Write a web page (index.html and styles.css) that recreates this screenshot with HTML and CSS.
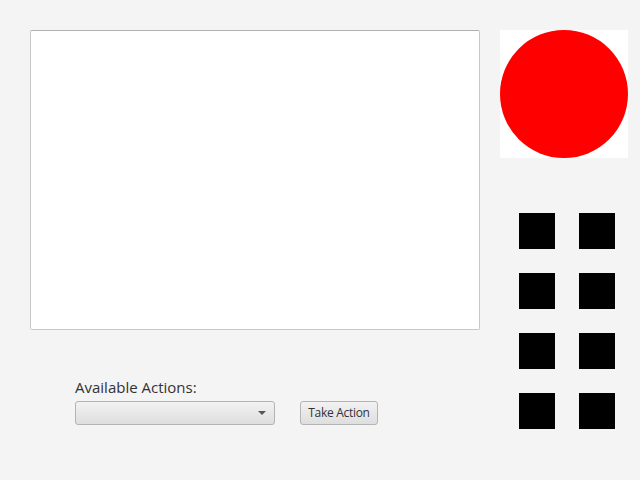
FILE: index.html
```html
<!DOCTYPE html>
<html>
<head>
<meta charset="utf-8">
<link rel="stylesheet" href="styles.css">
</head>
<body>
<div class="app">
  <div class="left">
    <div class="textarea"></div>
    <div class="controls">
      <div class="label">Available Actions:</div>
      <div class="row">
        <div class="combo"><span class="arrow"></span></div>
        <div class="button">Take Action</div>
      </div>
    </div>
  </div>
  <div class="right">
    <div class="circlebox"><div class="circle"></div></div>
    <div class="grid">
      <div class="sq"></div><div class="sq"></div>
      <div class="sq"></div><div class="sq"></div>
      <div class="sq"></div><div class="sq"></div>
      <div class="sq"></div><div class="sq"></div>
    </div>
  </div>
</div>
</body>
</html>
```
FILE: styles.css
```css
html, body {
  margin: 0;
  padding: 0;
  background: #f4f4f4;
  width: 640px;
  height: 480px;
  overflow: hidden;
  font-family: "Open Sans", "Noto Sans", "Liberation Sans", sans-serif;
}
.app {
  display: flex;
  padding: 30px 0 0 30px;
  gap: 20px;
}
.left {
  width: 450px;
  display: flex;
  flex-direction: column;
}
.textarea {
  box-sizing: border-box;
  width: 450px;
  height: 300px;
  background: #fff;
  border: 1px solid #c8c8c8;
  border-top-color: #b0b0b0;
  border-radius: 2px;
}
.controls {
  margin-top: 47px;
  padding-left: 45px;
}
.label {
  font-size: 15px;
  line-height: 21px;
  color: #333;
}
.row {
  margin-top: 3px;
  display: flex;
  gap: 25px;
}
.combo {
  box-sizing: border-box;
  width: 200px;
  height: 24px;
  border: 1px solid #b4b4b4;
  border-radius: 3px;
  background: linear-gradient(#f2f2f2, #dedede);
  display: flex;
  align-items: center;
  justify-content: flex-end;
  padding-right: 8px;
}
.arrow {
  width: 0;
  height: 0;
  border-left: 4px solid transparent;
  border-right: 4px solid transparent;
  border-top: 4px solid #555;
}
.button {
  box-sizing: border-box;
  width: 78px;
  height: 24px;
  border: 1px solid #b4b4b4;
  border-radius: 3px;
  background: linear-gradient(#f2f2f2, #dedede);
  font-size: 12px;
  line-height: 22px;
  text-align: center;
  color: #333;
  letter-spacing: -0.3px;
}
.right {
  width: 128px;
  display: flex;
  flex-direction: column;
}
.circlebox {
  width: 128px;
  height: 128px;
  background: #fff;
}
.circle {
  width: 128px;
  height: 128px;
  border-radius: 50%;
  background: #ff0000;
}
.grid {
  margin-top: 55px;
  margin-left: 19px;
  display: grid;
  grid-template-columns: 36px 36px;
  grid-auto-rows: 36px;
  column-gap: 24px;
  row-gap: 24px;
}
.sq {
  background: #000;
}
```
